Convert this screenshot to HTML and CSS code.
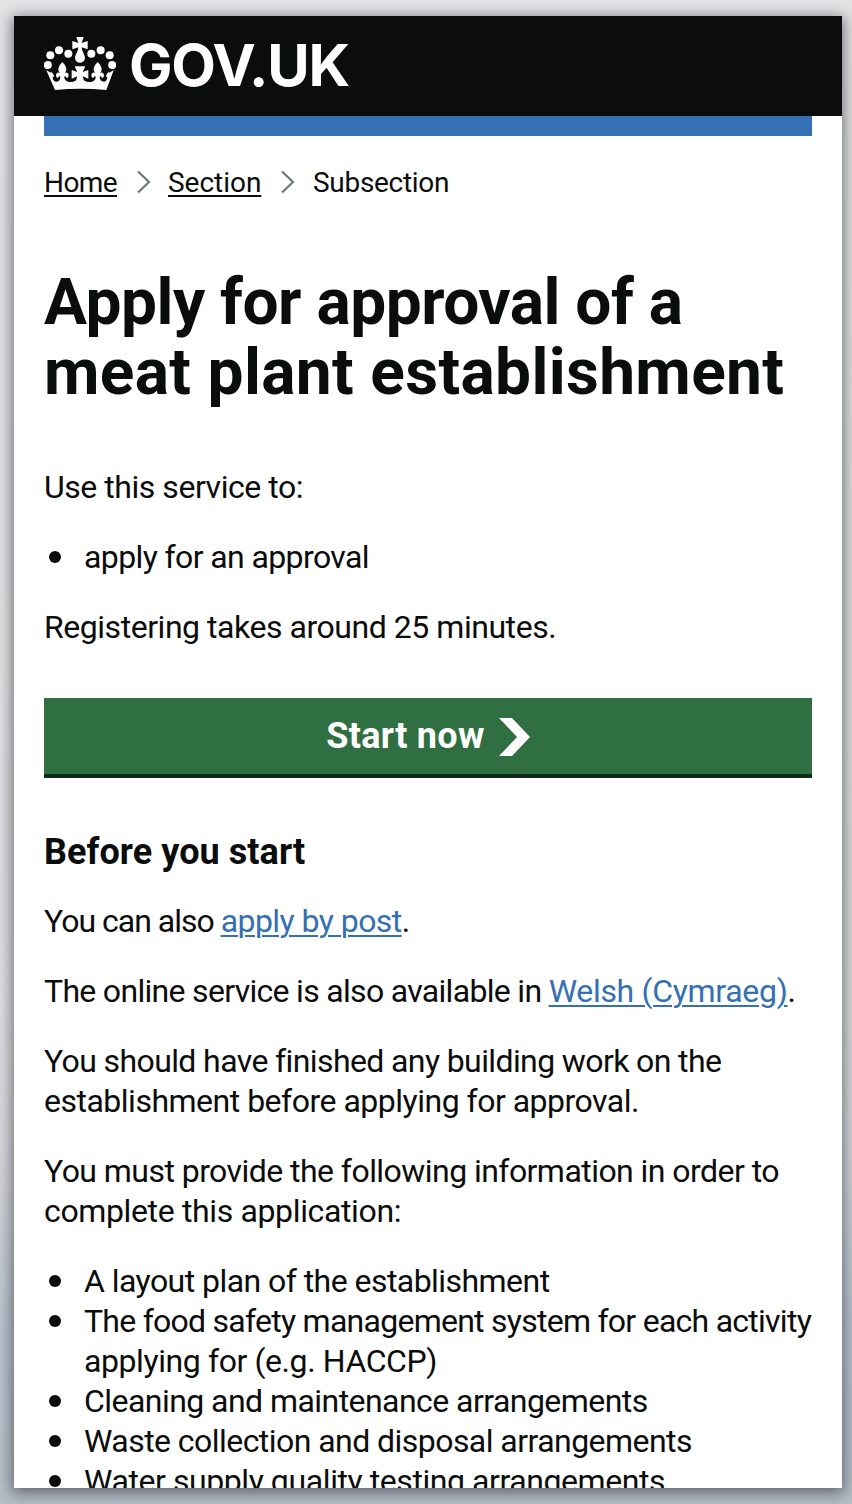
FILE: index.html
```
<!DOCTYPE html>
<html lang="en">
<head>
<meta charset="utf-8">
<title>Apply for approval of a meat plant establishment</title>
<link rel="stylesheet" href="styles.css">
</head>
<body>
<div class="window">
  <header class="header">
    <svg class="crown" viewBox="24 21 216 159" aria-hidden="true">
      <g fill="#fff">
        <circle cx="35.500" cy="105" r="12"/><circle cx="43" cy="76" r="12"/><circle cx="69" cy="61" r="12"/><circle cx="97" cy="71" r="12"/>
        <circle cx="228.500" cy="105" r="12"/><circle cx="221" cy="76" r="12"/><circle cx="194" cy="61" r="12"/><circle cx="166" cy="71" r="12"/>
        <path d="M121 21h22l-6 18 18-6v25l-18-6q0 9 6 19c9 14 1 27-11 27s-20-13-11-27q6-10 6-19l-18 6V33l18 6z"/>
        <path d="M31 121l15 8v-5l9 15-5 3q0 12 10 13Q73 156 74 138h10q1 18 20 18 18 0 22-14h12q4 14 22 14 19 0 20-18h10q1 17 14 17 10-1 10-13l-5-3 9-15v5l15-8-22 59q-77-7-154 0z"/>
        <path id="fleur" d="M79 96q20 19 7 34 5-5 11 1 3 9-5 14 0-7-7-6l-1 9h-10l-1-9q-7-1-7 6-8-5-5-14 6-6 11-1-13-15 7-34z"/>
        <use href="#fleur" x="106"/>
        <path d="M116 109h32l-8 17 17-6v26l-17-7 4 14h-24l4-14-17 7v-26l17 6z"/>
      </g>
    </svg>
    <span class="logo-text">GOV.UK</span>
  </header>
  <div class="content">
    <div class="phase-bar"></div>
    <nav class="breadcrumbs">
      <a class="home" href="#">Home</a>
      <svg class="chevron" viewBox="0 0 14 24"><path d="M1 1.500 12 12 1 22.500"/></svg>
      <a class="section" href="#">Section</a>
      <svg class="chevron" viewBox="0 0 14 24"><path d="M1 1.500 12 12 1 22.500"/></svg>
      <span class="subsection">Subsection</span>
    </nav>
    <h1><span class="h1-first">Apply for approval of a</span><br><span class="h1-second">meat plant establishment</span></h1>
    <p class="t46">Use this service to:</p>
    <ul><li class="t60">apply for an approval</li></ul>
    <p class="t46">Registering takes around 25 minutes.</p>
    <a class="start" href="#"><span>Start now</span><svg viewBox="0 0 31 38"><path d="M0 0h13l18 19-18 19H0l18-19z"/></svg></a>
    <h2>Before you start</h2>
    <p><span class="t98">You can also </span><a class="t56" href="#">apply by post</a>.</p>
    <p><span class="t68">The online service is also available in </span><a class="t30" href="#">Welsh (Cymraeg)</a>.</p>
    <p><span class="t60">You should have finished any building work on the</span><br><span class="t50">establishment before applying for approval.</span></p>
    <p><span class="t55">You must provide the following information in order to</span><br><span class="t36">complete this application:</span></p>
    <ul>
      <li class="t55">A layout plan of the establishment</li>
      <li><span class="t74">The food safety management system for each activity</span><br><span class="t41">applying for (e.g. HACCP)</span></li>
      <li class="t55">Cleaning and maintenance arrangements</li>
      <li class="t55">Waste collection and disposal arrangements</li>
      <li class="t43">Water supply quality testing arrangements</li>
    </ul>
  </div>
</div>
</body>
</html>
```
FILE: styles.css
```
* { box-sizing: border-box; }
html { height: 100%; }
body {
  margin: 0;
  height: 1504px;
  padding: 16px 10px 16px 14px;
  overflow: hidden;
  background: linear-gradient(#e2e4e5 0, #dcdedf 1000px, #d6d8db 1150px, #b8c3ce 1330px, #b5bfc8 100%);
  font-family: Roboto, "Liberation Sans", sans-serif;
  font-size: 32px;
  line-height: 40px;
  color: #0b0c0c;
}
.window { height: 1472px; background: #fff; box-shadow: 0 3px 14px 2px rgba(40, 40, 50, .6); }
.content { height: 1372px; padding: 0 30px; overflow: hidden; }
.header { display: flex; height: 100px; padding: 21px 30px 0; background: #0b0c0c; }
.crown { width: 72px; height: 53px; }
.logo-text { margin: -2px 0 0 13px; font-family: Inter, Roboto, sans-serif; font-size: 58px; line-height: 60px; font-weight: 650; letter-spacing: -1.2px; color: #fff; }
.phase-bar { height: 20px; background: #3470b3; }
.breadcrumbs { display: flex; height: 40px; margin-top: 27px; font-size: 28px; }
.breadcrumbs a { color: inherit; text-underline-offset: 3px; text-decoration-thickness: 2px; text-decoration-skip-ink: none; }
.home { width: 73px; letter-spacing: -.58px; }
.section { width: 93px; letter-spacing: -.03px; }
.subsection { letter-spacing: -.3px; }
.chevron { width: 14px; height: 24px; margin: 7px 17px 0 20px; fill: none; stroke: #6f777b; stroke-width: 2.2; }
.section + .chevron { margin-right: 18px; }
h1, h2, p, ul { margin: 0; }
h1 { margin: 65px 0 59px; font-size: 64px; line-height: 70px; font-weight: 700; white-space: nowrap; }
.h1-first { letter-spacing: -.5px; }
.h1-second { letter-spacing: .35px; }
p, ul { margin-bottom: 30px; white-space: nowrap; }
ul { padding: 0; list-style: none; }
li { position: relative; padding-left: 40px; }
li::before { content: ""; position: absolute; left: 5px; top: 14px; width: 12px; height: 12px; border-radius: 50%; background: #0b0c0c; }
p a { color: #3470b3; text-decoration-thickness: 2px; text-underline-offset: 3px; }
.start { display: flex; justify-content: center; height: 80px; margin-top: 51px; padding-top: 18px; border-bottom: 4px solid #0f2b1a; background: #2f6f41; color: #fff; font-size: 36px; font-weight: 700; letter-spacing: .3px; text-decoration: none; }
.start svg { width: 31px; height: 38px; margin: 2px 0 0 14px; fill: #fff; }
h2 { margin: 54px 0 29px; font-size: 36px; line-height: 40px; font-weight: 700; letter-spacing: .06px; }
.t30 { letter-spacing: -.3px; }
.t36 { letter-spacing: -.36px; }
.t41 { letter-spacing: -.41px; }
.t43 { letter-spacing: -.43px; }
.t46 { letter-spacing: -.46px; }
.t50 { letter-spacing: -.5px; }
.t55 { letter-spacing: -.55px; }
.t56 { letter-spacing: -.56px; }
.t60 { letter-spacing: -.61px; }
.t68 { letter-spacing: -.69px; }
.t74 { letter-spacing: -.74px; }
.t98 { letter-spacing: -1px; }
```
